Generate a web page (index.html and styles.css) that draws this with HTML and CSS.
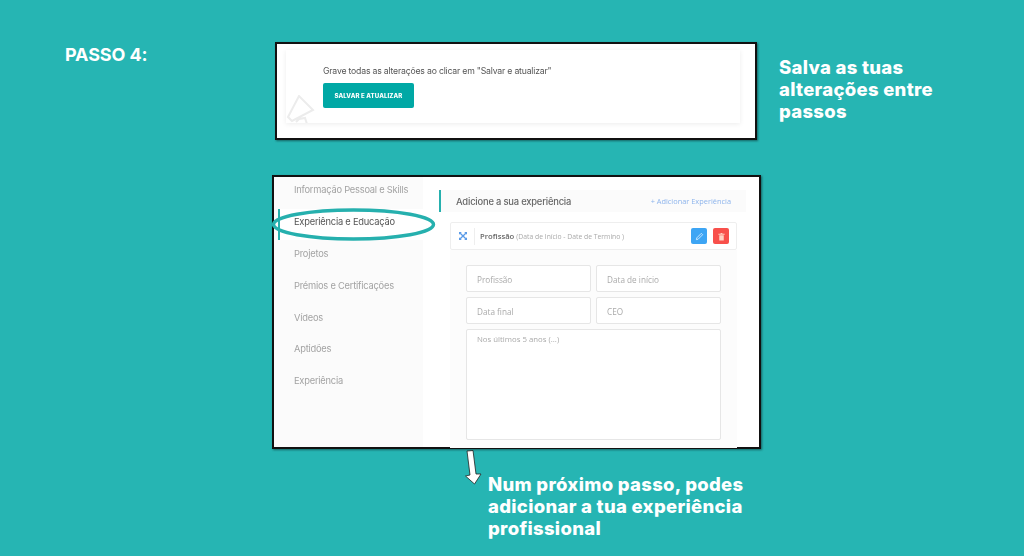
FILE: index.html
```html
<!DOCTYPE html>
<html lang="pt">
<head>
<meta charset="utf-8">
<title>Passo 4</title>
<link rel="stylesheet" href="styles.css">
</head>
<body>
<main class="page">
  <section class="top-row">
    <h1 class="step">PASSO 4:</h1>
    <div class="shot shot-save">
      <div class="save-panel">
        <svg class="megaphone" viewBox="0 0 30 30" width="30" height="30" aria-hidden="true">
          <path d="M2 22 L13 1 L27 15 L6 26 Z M10 27 L13 24 L19 23 L21 29" fill="none" stroke="#ececec" stroke-width="2"/>
        </svg>
        <p class="save-text">Grave todas as alterações ao clicar em "Salvar e atualizar"</p>
        <button class="save-btn" type="button">SALVAR E ATUALIZAR</button>
      </div>
    </div>
    <p class="callout callout-side">Salva as tuas alterações entre passos</p>
  </section>

  <section class="shot shot-form">
    <nav class="menu">
      <a class="menu-item">Informação Pessoal e Skills</a>
      <a class="menu-item active">Experiência e Educação</a>
      <a class="menu-item">Projetos</a>
      <a class="menu-item">Prémios e Certificações</a>
      <a class="menu-item">Vídeos</a>
      <a class="menu-item">Aptidões</a>
      <a class="menu-item">Experiência</a>
    </nav>
    <div class="content">
      <header class="content-head">
        <h2 class="content-title">Adicione a sua experiência</h2>
        <span class="add-link">+ Adicionar Experiência</span>
      </header>
      <div class="entry">
        <svg class="move-icon" viewBox="0 0 10 10" width="8" height="8" aria-hidden="true">
          <path d="M1.5 1.5 L8.5 8.5 M8.5 1.5 L1.5 8.5" stroke="#5a9be8" stroke-width="1.6"/>
          <path d="M0 0H3.5L0 3.5Z M10 0V3.5L6.5 0Z M0 10V6.5L3.5 10Z M10 10H6.5L10 6.5Z" fill="#5a9be8"/>
        </svg>
        <span class="entry-text"><b>Profissão</b> <small>(Data de Início - Date de Termino )</small></span>
        <span class="icon-btn edit">
          <svg viewBox="0 0 10 10" width="9" height="9" aria-hidden="true"><path d="M1.5 8.5 L2 6.5 L7 1.5 L8.5 3 L3.5 8 Z" fill="none" stroke="#d5ecff" stroke-width="1"/></svg>
        </span>
        <span class="icon-btn del">
          <svg viewBox="0 0 10 10" width="9" height="9" aria-hidden="true"><path d="M1.5 2H8.5V3H1.5Z M4 1H6V2H4Z M2.5 3.5H7.5V9.5H2.5Z" fill="#ffd2c4"/></svg>
        </span>
      </div>
      <div class="fields">
        <div class="field">Profissão</div>
        <div class="field">Data de início</div>
        <div class="field">Data final</div>
        <div class="field">CEO</div>
        <div class="field area">Nos últimos 5 anos (...)</div>
      </div>
    </div>
    <svg class="oval" viewBox="0 0 166 36" width="166" height="36" aria-hidden="true">
      <ellipse cx="81.5" cy="17.5" rx="80" ry="14.5" fill="none" stroke="#26b0ae" stroke-width="3.4"/>
    </svg>
  </section>

  <section class="bottom-row">
    <svg class="arrow" viewBox="0 0 20 36" width="20" height="36" aria-hidden="true">
      <path d="M3 1 L9 0.5 L12 24 L17 24 L10.5 34 L1.5 26 L6 25 Z" fill="#fff" stroke="#222" stroke-width="0.8"/>
    </svg>
    <p class="callout callout-bottom">Num próximo passo, podes adicionar a tua experiência profissional</p>
  </section>
</main>
</body>
</html>
```
FILE: styles.css
```css
* { box-sizing: border-box; }
html, body { margin: 0; padding: 0; }
body {
  background: #26b5b3;
  font-family: Inter, "Liberation Sans", sans-serif;
  overflow: hidden;
}
.page {
  width: 1024px;
  height: 556px;
  padding-top: 42px;
  display: flex;
  flex-direction: column;
}
.top-row {
  display: grid;
  grid-template-columns: 275px 482px 1fr;
  height: 98px;
}
.step {
  margin: 3px 0 0 65px;
  font-size: 18px;
  line-height: 20px;
  font-weight: 700;
  color: #fff;
  letter-spacing: -0.1px;
}
.shot {
  background: #fff;
  border: 2px solid #111;
  box-shadow: 1px 1px 2px rgba(0, 0, 0, .45);
}
.shot-save { padding: 6px 15px 13px 9px; }
.save-panel {
  position: relative;
  height: 73px;
  padding: 15px 0 0 37px;
  background: #fff;
  box-shadow: 0 1px 5px rgba(0, 0, 0, .08);
  overflow: hidden;
  filter: blur(.4px);
}
.megaphone { position: absolute; left: 0; top: 45px; }
.save-text {
  margin: 0;
  font-size: 8.7px;
  line-height: 12px;
  color: #555;
  letter-spacing: -.2px;
}
.save-btn {
  display: block;
  width: 91px;
  height: 25px;
  margin-top: 6px;
  padding: 0;
  border: 0;
  border-radius: 2px;
  background: #00a8a5;
  color: #fff;
  font: 800 6.1px/25px Inter, "Liberation Sans", sans-serif;
  letter-spacing: .1px;
}
.callout {
  margin: 0;
  color: #fff;
  font-weight: 800;
  line-height: 22px;
}
.callout-side {
  width: 170px;
  margin: 14px 0 0 22px;
  font-size: 18.5px;
  letter-spacing: .3px;
}
.shot-form {
  position: relative;
  width: 489px;
  height: 274px;
  margin: 35px 0 0 272px;
  display: flex;
  overflow: visible;
}
.menu {
  width: 149px;
  flex: none;
  background: #fbfbfb;
  display: flex;
  flex-direction: column;
  filter: blur(.4px);
}
.menu-item {
  height: 31.7px;
  margin-left: 4px;
  padding-left: 16px;
  font-size: 9.3px;
  line-height: 27px;
  letter-spacing: -.22px;
  color: #a3a3a3;
  white-space: nowrap;
}
.menu-item:first-child { line-height: 26px; }
.menu-item.active {
  background: #fff;
  color: #555;
  border-left: 2px solid #26b0ae;
  padding-left: 14px;
  height: 31px;
  margin-bottom: .7px;
  line-height: 26px;
}
.content {
  flex: 1;
  padding: 13px 13px 0 16px;
  filter: blur(.4px);
}
.content-head {
  display: flex;
  justify-content: space-between;
  align-items: center;
  height: 22px;
  padding: 0 15px;
  background: #fbfbfb;
  border-left: 2px solid #26b0ae;
}
.content-title {
  margin: 0;
  font-size: 9.4px;
  font-weight: 500;
  letter-spacing: -.2px;
  color: #666;
}
.add-link {
  font: 7.4px "Open Sans", sans-serif;
  color: #8db4ec;
}
.entry {
  display: flex;
  align-items: center;
  height: 28px;
  margin: 10px 9px 0 11px;
  padding: 0 7px 0 8px;
  background: #fff;
  border: 1px solid #eee;
  border-radius: 2px;
}
.move-icon { flex: none; }
.entry-text {
  flex: 1;
  margin-left: 7px;
  padding-left: 5px;
  border-left: 1px solid #eee;
  font: 7.7px/16px "Open Sans", sans-serif;
  color: #666;
}
.entry-text b { font-weight: 600; }
.entry-text small { font-size: 6.8px; color: #aaa; }
.icon-btn {
  width: 16px;
  height: 16px;
  margin-left: 6px;
  border-radius: 2px;
  display: flex;
  align-items: center;
  justify-content: center;
}
.edit { background: #3da5f4; }
.del { background: #f8504b; }
.fields {
  display: grid;
  grid-template-columns: 125px 125px;
  grid-auto-rows: 27px;
  gap: 5px;
  margin: 0 9px 0 11px;
  padding: 15px 16px 8px;
  background: #fcfcfc;
  height: 198px;
}
.field {
  background: #fff;
  border: 1px solid #e6e6e6;
  border-radius: 2px;
  padding-left: 10px;
  font: 8.2px/27px "Open Sans", sans-serif;
  color: #aaa;
}
.field.area {
  grid-column: 1 / 3;
  height: 111px;
  line-height: 18px;
  font-size: 7.8px;
}
.oval {
  position: absolute;
  left: -2px;
  top: 30px;
}
.bottom-row {
  display: flex;
  margin: 1px 0 0 464px;
}
.arrow { flex: none; }
.callout-bottom {
  width: 275px;
  margin: 23px 0 0 4px;
  font-size: 18.5px;
  letter-spacing: .3px;
}
```
